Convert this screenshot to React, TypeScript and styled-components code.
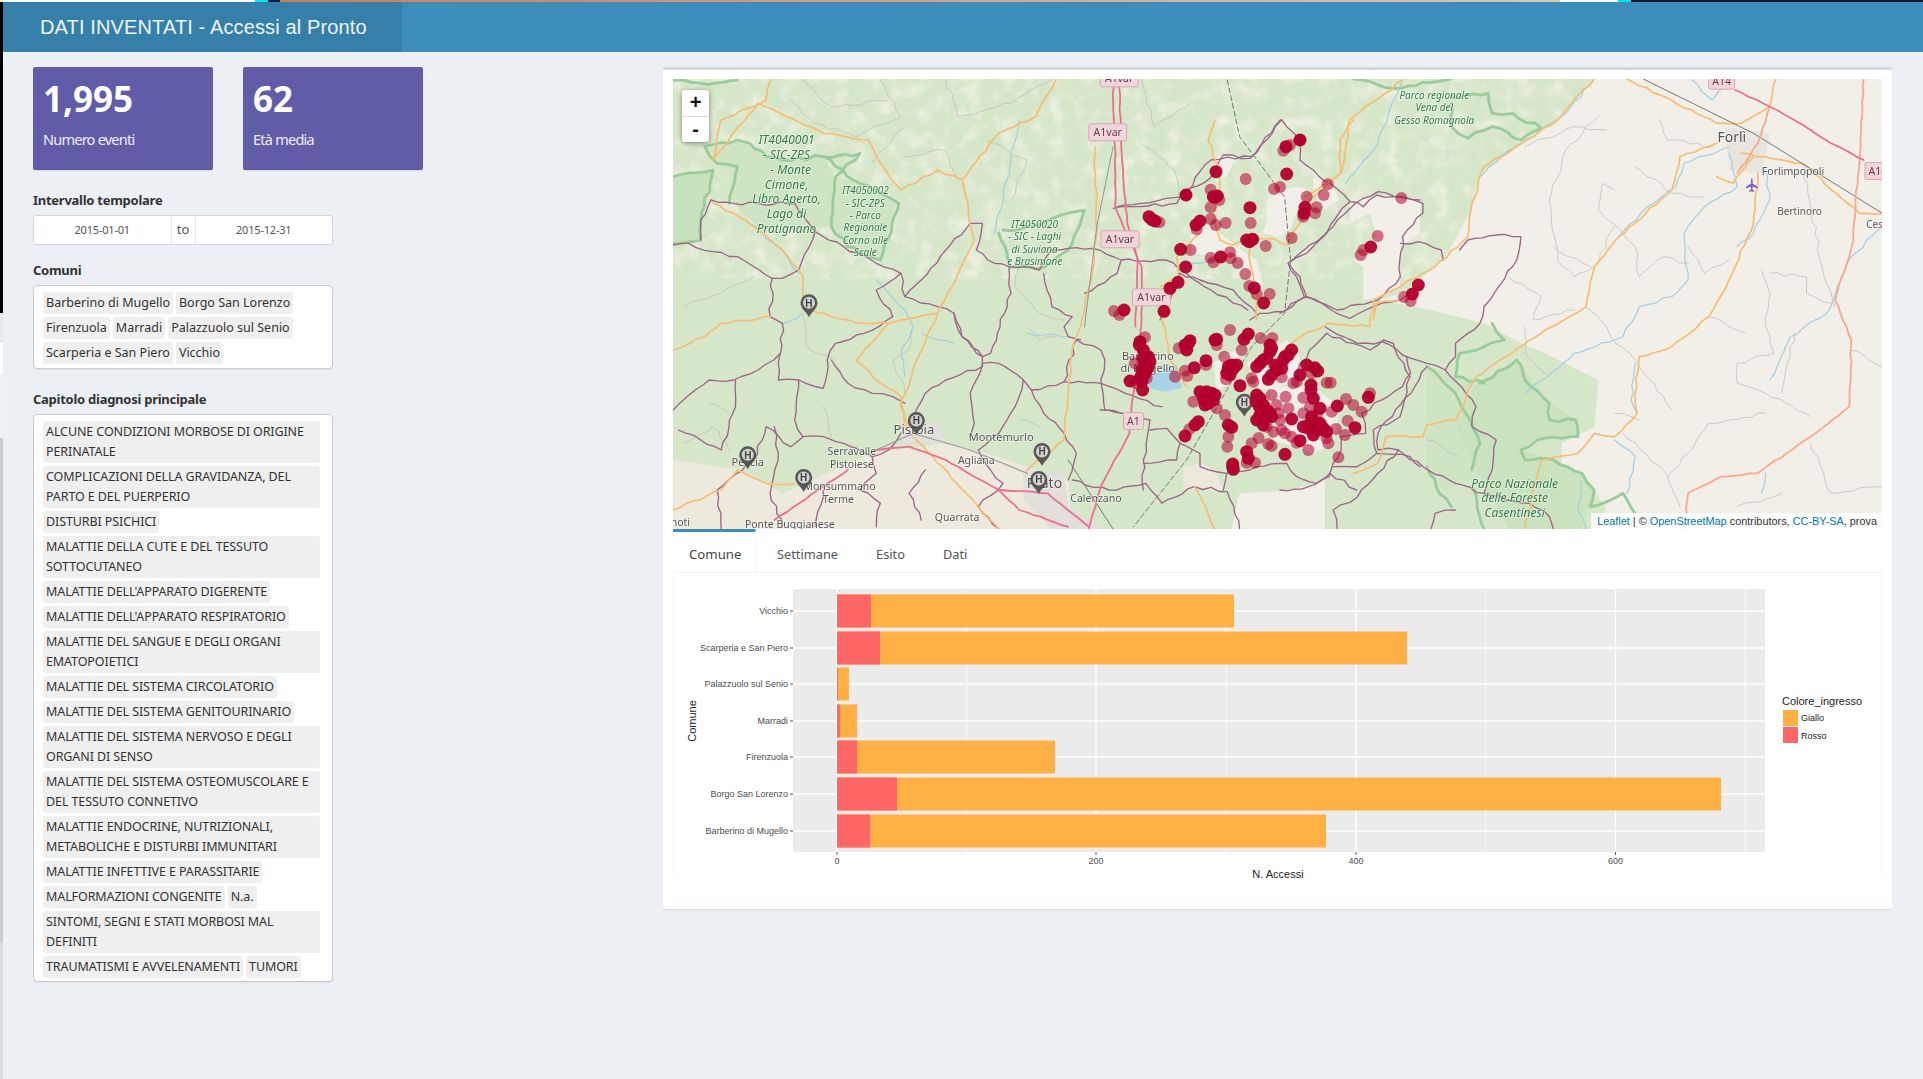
import React from 'react';
import styled, { createGlobalStyle } from 'styled-components';

const Global = createGlobalStyle`
  html, body { margin: 0; padding: 0; background: #ecf0f5; }
  body { font-family: "Noto Sans", "Open Sans", sans-serif; color: #333; overflow: hidden; }
  * { box-sizing: border-box; }
`;

const Page = styled.div`width: 1923px; height: 1079px; display: flex; flex-direction: column; overflow: hidden;`;
const TopStrip = styled.div`height: 2px; display: flex; flex: none;`;
const StripPart = styled.div<{ $w: number; $bg: string }>`width: ${p => p.$w}px; background: ${p => p.$bg};`;
const Body = styled.div`flex: 1; display: flex; min-height: 0;`;
const LeftEdge = styled.div`width: 3px; flex: none; display: flex; flex-direction: column;`;
const EdgePart = styled.div<{ $h: number; $bg: string }>`height: ${p => p.$h}px; background: ${p => p.$bg};`;
const Main = styled.div`flex: 1; display: flex; flex-direction: column; min-width: 0;`;
const Header = styled.header`height: 50px; flex: none; display: flex; background: #3c8dbc;`;
const Logo = styled.div`width: 399px; background: #367fa9; padding-left: 37px; color: #eef5f9; display: flex; align-items: center;
  font: 20px/1 "Liberation Sans", Arial, sans-serif; letter-spacing: .13px;`;
const Content = styled.div`display: grid; grid-template-columns: 630px 1229px; padding: 15px 0 0 30px; align-items: start;`;
const Sidebar = styled.aside`display: flex; flex-direction: column;`;
const Cards = styled.div`display: flex; gap: 30px; margin-bottom: 20px;`;
const Card = styled.div`width: 180px; height: 103px; background: #605ca8; border-radius: 2px; color: #fff; padding: 10px;
  box-shadow: 0 1px 1px rgba(0,0,0,.1);`;
const CardValue = styled.div`font: 700 35px/44px "Noto Sans", sans-serif;`;
const CardLabel = styled.div`font-size: 14.5px; line-height: 20px; margin-top: 8px; color: #f0eff8; letter-spacing: -.76px;`;
const Label = styled.div`font-weight: 700; font-size: 13px; line-height: 20px; width: 300px; margin-bottom: 5px; color: #333; letter-spacing: -.26px;`;
const DateRow = styled.div`width: 300px; height: 30px; display: flex; background: #fff; border: 1px solid #d2d6de; border-radius: 3px; margin-bottom: 15px;`;
const DateCell = styled.div`flex: 1; text-align: center; font-size: 11px; line-height: 28px; color: #555; letter-spacing: -.2px;`;
const DateTo = styled.div`width: 25px; text-align: center; font-size: 13px; line-height: 26px; color: #555; background: #fff; border: solid #e6e8ec; border-width: 0 1px;`;
const SelectBox = styled.div<{ $last?: boolean }>`width: 300px; background: #fff; border: 1px solid #c9cbd0; border-radius: 4px; padding: 6px 12px ${p => (p.$last ? 3 : 4)}px 9px;
  display: flex; flex-wrap: wrap; gap: 3px; margin-bottom: ${p => (p.$last ? 0 : 20)}px; box-shadow: 0 1px 1px rgba(0,0,0,.06);`;
const Chip = styled.span<{ $caps?: boolean }>`background: #efefef; border-radius: 3px; padding: 1px 3px; font-size: 12.5px; line-height: 20px; color: #333; max-width: 277px;
  letter-spacing: ${p => (p.$caps ? -0.1 : 0)}px;`;

const MapCard = styled.section`height: 842px; background: #fff; border-top: 3px solid #d2d6de; border-radius: 3px; padding: 9px 10px 0; box-shadow: 0 1px 1px rgba(0,0,0,.1);`;
const MapWrap = styled.div`position: relative; height: 450px; overflow: hidden; background: #d6e6c9;`;
const MapSvg = styled.svg`display: block; width: 1209px; height: 450px;`;
const ZoomCtl = styled.div`position: absolute; left: 9px; top: 11px; width: 27px; border-radius: 3px; background: #fff; box-shadow: 0 1px 5px rgba(0,0,0,.45);`;
const ZoomBtn = styled.div`height: 26px; font: 700 20px/25px "Liberation Sans", sans-serif; color: #111; text-align: center; & + & { border-top: 1px solid #ddd; }`;
const Attribution = styled.div`position: absolute; right: 0; bottom: 0; height: 16px; padding: 0 5px 0 6px; background: rgba(255,255,255,.8); color: #333; font: 10.9px/16px "Liberation Sans", sans-serif; white-space: nowrap;`;
const AttrLink = styled.span`color: #0078a8;`;
const Tabs = styled.nav`height: 44px; display: flex; border-bottom: 1px solid #f4f4f4;`;
const Tab = styled.div<{ $active?: boolean }>`height: 44px; padding: 12px 15px 0 ${p => (p.$active ? 16 : 21)}px; font-size: ${p => (p.$active ? 13.2 : 12.8)}px; line-height: 20px; color: ${p => (p.$active ? '#444' : '#555')};
  border-top: 3px solid ${p => (p.$active ? '#3c8dbc' : 'transparent')}; border-right: 1px solid ${p => (p.$active ? '#f4f4f4' : 'transparent')};
  width: ${p => (p.$active ? '83px' : 'auto')}; margin-right: ${p => (p.$active ? 0 : 1)}px;`;
const TabBody = styled.div`height: 305px; border: solid #f8f8f8; border-width: 0 1px;`;
const ChartSvg = styled.svg`display: block; width: 1207px; height: 305px; overflow: visible;`;

const chips1 = ['Barberino di Mugello', 'Borgo San Lorenzo', 'Firenzuola', 'Marradi', 'Palazzuolo sul Senio', 'Scarperia e San Piero', 'Vicchio'];
const chips2 = ['ALCUNE CONDIZIONI MORBOSE DI ORIGINE PERINATALE', 'COMPLICAZIONI DELLA GRAVIDANZA, DEL PARTO E DEL PUERPERIO', 'DISTURBI PSICHICI',
  'MALATTIE DELLA CUTE E DEL TESSUTO SOTTOCUTANEO', "MALATTIE DELL'APPARATO DIGERENTE", "MALATTIE DELL'APPARATO RESPIRATORIO",
  'MALATTIE DEL SANGUE E DEGLI ORGANI EMATOPOIETICI', 'MALATTIE DEL SISTEMA CIRCOLATORIO', 'MALATTIE DEL SISTEMA GENITOURINARIO',
  'MALATTIE DEL SISTEMA NERVOSO E DEGLI ORGANI DI SENSO', 'MALATTIE DEL SISTEMA OSTEOMUSCOLARE E DEL TESSUTO CONNETIVO',
  'MALATTIE ENDOCRINE, NUTRIZIONALI, METABOLICHE E DISTURBI IMMUNITARI', 'MALATTIE INFETTIVE E PARASSITARIE', 'MALFORMAZIONI CONGENITE', 'N.a.',
  'SINTOMI, SEGNI E STATI MORBOSI MAL DEFINITI', 'TRAUMATISMI E AVVELENAMENTI', 'TUMORI'];

/* ---------- map drawing: coordinates are page pixels, read through four crops ---------- */
type Z = 'a' | 'b' | 'c' | 'd';
const conv: Record<Z, (x: number, y: number) => [number, number]> = {
  a: (x, y) => [660 + x / 2.45, 60 + y / 3],
  b: (x, y) => [1280 + x / 2.45, 60 + y / 3],
  c: (x, y) => [1100 + x / 3, 120 + y / 3],
  d: (x, y) => [1100 + x / 3, 320 + y / 3],
};
const parse = (z: Z, s: string) => s.trim().split(/\s+/).map(p => { const [x, y] = p.split(',').map(Number); return conv[z](x, y); });
const pts = (z: Z, s: string) => parse(z, s).map(([x, y]) => `${x.toFixed(1)},${y.toFixed(1)}`).join(' ');
/* roads and boundaries wander: each straight leg is broken into short jittered steps */
const wiggle = (z: Z, s: string, amp: number) => {
  let seed = s.length * 7919 + 17;
  const rnd = () => { seed = (seed * 16807) % 2147483647; return seed / 2147483647 - 0.5; };
  const p = parse(z, s);
  const out: string[] = [];
  p.forEach(([x, y], i) => {
    out.push(`${x.toFixed(1)},${y.toFixed(1)}`);
    const nxt = p[i + 1];
    if (!nxt) return;
    const dx = nxt[0] - x, dy = nxt[1] - y, len = Math.hypot(dx, dy), n = Math.floor(len / 7);
    for (let k = 1; k < n; k++) {
      const t = k / n, o = rnd() * 2 * amp;
      out.push(`${(x + dx * t - (dy / len) * o).toFixed(1)},${(y + dy * t + (dx / len) * o).toFixed(1)}`);
    }
  });
  return out.join(' ');
};

const Area = styled.polygon<{ $c: string }>`fill: ${p => p.$c}; stroke: none;`;
const Line = styled.polyline<{ $c: string; $w: number; $dash?: string }>`fill: none; stroke: ${p => p.$c}; stroke-width: ${p => p.$w}; stroke-linejoin: round; stroke-linecap: round;
  ${p => (p.$dash ? `stroke-dasharray: ${p.$dash};` : '')}`;
const MapText = styled.text<{ $s: number; $c: string; $i?: boolean }>`font-family: "Noto Sans", sans-serif; font-size: ${p => p.$s}px; fill: ${p => p.$c}; text-anchor: middle;
  font-style: ${p => (p.$i ? 'italic' : 'normal')}; paint-order: stroke; stroke: rgba(255,255,255,.55); stroke-width: 1.5px;`;
const ShieldText = styled.text`font-family: "Noto Sans", sans-serif; font-size: 10.5px; fill: #6b3a4a; text-anchor: middle;`;
const Dot = styled.circle<{ $solid: boolean }>`fill: #b2002d; fill-opacity: ${p => (p.$solid ? 0.95 : 0.55)};`;
const PinLetter = styled.text`font: 700 10px "Liberation Sans", sans-serif; fill: #444; text-anchor: middle;`;

const beige = '#f2efe9';
const areas: [Z, string, string][] = [
  ['b', '770,57 680,180 490,340 470,450 400,600 300,700 240,720 370,750 500,790 590,850 650,880 780,960 770,1100 690,1150 690,1270 770,1290 800,1350 760,1407 1480,1407 1480,57', beige],
  ['a', '32,1200 200,1230 300,1300 520,1180 700,1150 800,1180 1000,1260 1010,1407 32,1407', '#ede9dd'],
  ['c', '270,345 300,330 350,330 400,370 430,395 470,420 490,500 470,520 450,470 420,420 340,410 280,400', beige],
  ['c', '500,240 540,215 580,200 620,205 570,330 540,350 490,340 500,300', beige],
  ['c', '640,170 690,190 720,240 670,270 640,210', beige],
  ['c', '750,250 820,225 900,230 960,245 960,340 900,380 900,500 850,530 790,540 790,440 760,420 830,350 810,280 750,310', beige],
  ['c', '350,110 410,105 380,170 350,190', beige],
  ['d', '340,130 380,100 420,90 400,190 350,210', beige],
  ['d', '440,130 560,60 600,110 580,190 480,210', beige],
  ['d', '510,200 640,200 720,260 700,370 640,400 520,360', beige],
  ['d', '250,440 310,430 350,460 370,510 250,510', '#ece8dc'],
  ['a', '1420,1300 1568,1290 1568,1407 1400,1407', beige],
  ['b', '0,1300 110,1260 110,1407 0,1407', beige],
  ['a', '110,260 190,240 260,290 400,290 430,350 420,500 250,510 180,430 170,340 140,310', '#cfe4c3'],
  ['a', '32,350 130,330 100,480 100,540 32,550', '#c8e1bd'],
  ['a', '420,500 430,350 490,370 580,430 540,600 460,560', '#cfe4c3'],
  ['b', '360,920 470,960 450,1080 490,1250 400,1290 360,1220', '#cfe4c2'],
  ['b', '480,970 580,900 660,1030 725,1080 730,1130 630,1140 590,1170 670,1200 740,1240 770,1290 740,1407 560,1407 490,1250 430,1100', '#cbe2bf'],
  ['a', '590,1090 680,1090 700,1150 590,1150', '#e2ded9'],
  ['a', '890,1230 990,1240 1000,1340 1090,1407 960,1407 890,1320', '#e2dfda'],
  ['b', '1090,200 1200,220 1180,340 1100,330', '#e8e4de'],
  ['d', '140,170 230,135 245,205 190,215 150,205', '#a9d3e6'],
];
const parks: [Z, string][] = [
  ['a', '110,260 190,240 220,250 260,290 300,300 400,290 490,280 430,350 420,500 460,560 540,600 585,430 540,400 490,370 400,290'],
  ['a', '32,350 130,330 100,480 100,540 32,552'],
  ['a', '110,260 140,310 190,320 170,430'],
  ['a', '830,520 860,622 940,622 1000,570 1040,450 900,500 840,510'],
  ['a', '32,60 100,70 190,60'],
  ['b', '180,57 280,85 420,57'],
  ['b', '420,110 510,100 520,160 570,160 640,205 590,240 520,200 460,235 420,200 420,130'],
  ['b', '520,790 550,840 500,860 440,880 430,950 500,970'],
  ['b', '360,920 430,1000 490,1150 470,1230'],
  ['b', '490,970 580,900 600,960 660,1030 660,1080 725,1080 730,1130 630,1140 590,1170 600,1200 670,1200 740,1240 770,1290 760,1340 840,1300 870,1360'],
  ['b', '360,1220 390,1300 420,1340'],
  ['b', '470,1280 500,1407'],
];
const rivers: [Z, string][] = [
  ['a', '210,480 290,560 340,640'], ['a', '300,790 350,760'], ['a', '530,660 600,750 620,800 590,880 600,950'], ['a', '640,820 720,850'],
  ['a', '820,520 860,300 880,180'], ['a', '900,820 1000,830'], ['a', '1260,620 1360,600'],
  ['b', '1100,60 1060,120 1010,60'], ['b', '770,57 700,160 620,230 540,290 490,350'],
  ['b', '1100,260 990,310 970,380 900,440 830,530'], ['b', '1100,280 1120,380 1040,440 990,520 1000,660 960,710 880,740 840,830 720,880 600,1000'],
  ['b', '1190,330 1200,420 1160,520 1120,560'], ['b', '1476,500 1400,590 1340,760 1250,830 1200,960'], ['b', '870,910 860,1020 875,1060'],
  ['b', '820,1140 870,1190 850,1300'], ['b', '740,1260 730,1350 750,1407'], ['b', '1190,1240 1180,1300'], ['b', '300,60 240,250 160,370'],
];
const minor: [Z, string][] = [
  ['a', '540,60 590,170 480,230 380,190 320,120'], ['a', '700,60 730,170 860,130 960,60'], ['a', '730,360 700,270 600,290'], ['a', '600,200 520,310'],
  ['a', '230,650 150,700 60,740'], ['a', '900,800 930,840 970,830'], ['a', '880,620 870,680 930,760 990,780'], ['a', '120,1030 170,1060'],
  ['a', '400,1040 420,1130'], ['a', '880,1080 930,1100'], ['a', '600,1000 570,900 610,870 620,800'], ['a', '350,60 420,140 560,120'], ['a', '800,240 900,300 860,420'],
  ['a', '1180,60 1210,200 1300,130'], ['a', '1180,250 1260,330 1270,410'], ['a', '350,760 360,860 430,900'], ['a', '60,1150 130,1100 170,1170'],
  ['b', '660,420 700,270 780,170'], ['b', '660,420 680,600 720,650 770,620 820,500'], ['b', '560,650 640,710 620,780 720,750'], ['b', '750,740 800,800 810,830 870,900 960,1050'],
  ['b', '820,390 790,370 780,450 870,560 880,650 940,590 1000,610'], ['b', '930,180 950,240 1060,260'], ['b', '870,320 960,400 1040,410'], ['b', '1000,560 1040,640 1100,600'],
  ['b', '1180,630 1200,700 1190,800 1210,880 1120,910 1120,970 1190,1000 1300,1070'], ['b', '1050,770 1140,820'], ['b', '1280,310 1300,440 1330,630 1360,740'],
  ['b', '1200,640 1290,650 1290,700 1350,730'], ['b', '1400,870 1476,920'], ['b', '1260,820 1230,1000'], ['b', '1300,1150 1350,1300 1476,1280'],
  ['b', '950,1250 1000,1180 1050,1090 1190,1060'], ['b', '840,1120 950,1250 980,1340'], ['b', '600,800 600,880 660,950'], ['b', '670,560 760,620'],
  ['b', '820,1060 880,1080'], ['b', '1120,1340 1230,1300'], ['b', '600,260 720,200 800,210'], ['b', '360,1140 440,1190'],
];
const borders: [Z, string][] = [
  ['a', '32,555 70,550 130,575 190,590 230,620 275,655 300,655 340,630 380,515'],
  ['a', '125,420 180,430 240,430 330,430 380,515 450,560 530,610 590,640 600,710 680,740 720,760 740,830 790,890 810,880 860,700 855,620'],
  ['a', '600,710 640,660 700,570 760,490 790,490 775,570 820,610 855,620 930,630 960,570 1060,565 1130,600 1240,600 1290,640 1350,690 1440,750'],
  ['a', '125,420 100,480 100,540'], ['a', '275,655 270,770 300,790 295,880 240,930 180,960 120,960 32,1050'],
  ['a', '185,960 185,1040 150,1170 100,1140 45,1110'], ['a', '295,880 290,960 340,960 400,985 410,900 430,850 500,820 570,770 530,690 590,640'],
  ['a', '420,900 460,970 520,1000 570,1010 600,1030'], ['a', '340,960 330,1080 350,1130 320,1160 260,1100 230,1200 140,1290 150,1407'],
  ['a', '720,760 740,830 790,890 790,920 700,960 650,1000 620,1080'], ['a', '790,910 830,910 890,960 910,990 990,965 1080,970 1140,1000 1230,1040'],
  ['a', '790,910 760,1000 770,1090 760,1130'], ['a', '890,960 870,1040 830,1120 780,1170'], ['a', '910,990 940,1060 990,1120 1020,1180 1000,1260'],
  ['a', '990,965 1020,840 1080,870 1090,900 1080,960 1090,1050 1130,1060'], ['a', '1030,840 1000,830 990,800 1010,770 960,740 940,640'],
  ['a', '1130,600 1120,640 1040,700'], ['a', '1120,440 1180,430 1280,410 1350,300 1450,290 1520,180'],
  ['a', '350,1130 400,1130 450,1150 520,1190 560,1170 590,1120'], ['a', '520,1190 530,1240 490,1290 540,1330 530,1400'], ['a', '1010,1260 1100,1290 1190,1270 1230,1330 1310,1280 1390,1295 1420,1407'],
  ['a', '650,1230 610,1300 640,1380'], ['a', '780,1170 810,1230 840,1270 780,1340 830,1407'], ['a', '400,1290 380,1400'], ['a', '280,1100 290,1180 270,1300 300,1400'],
  ['c', '40,265 100,260 230,250 250,215 330,175 370,105 450,115 500,60 545,0'],
  ['c', '545,0 600,60 600,120 640,150 690,190 750,245 790,260 830,225 880,230 960,240'],
  ['c', '750,245 710,290 680,340 620,400 565,430 600,470 620,530 710,580 750,595 820,560 900,540 960,500'],
  ['c', '620,530 550,575 480,580 450,600'], ['c', '240,460 300,480 400,510 470,580'], ['c', '240,460 210,540 180,600'],
  ['b', '295,550 340,545 395,570 400,600'], ['b', '185,430 240,395 300,410 350,430 350,460 300,530 295,650 240,720 140,750 60,710 20,610 130,500 185,430'],
  ['b', '440,570 460,540 530,525 590,530 580,600 530,690 500,740 490,790 430,850 430,890 405,930'],
  ['b', '0,760 60,710'], ['b', '110,800 190,850 250,845 300,885 360,910 405,930 480,1040 470,1100 530,1140 520,1230 500,1300'],
  ['b', '310,890 320,940 300,980 200,1060 210,1120 150,1130 150,1170 130,1210 120,1250 70,1280 0,1290'],
  ['b', '360,920 330,980 240,1120 240,1170 290,1170 350,1220 430,1270 500,1300 610,1330 660,1370 670,1407'],
  ['b', '290,1170 190,1310 130,1350 140,1407'], ['b', '370,1407 380,1360 430,1350'],
  ['d', '0,270 70,280 150,300 130,420 130,510'], ['d', '150,330 200,325 240,370 230,420 130,430'], ['d', '240,370 300,400 300,440 380,460 370,510'],
  ['d', '380,460 470,440 560,430 590,470 650,490 690,460 770,510'], ['d', '700,440 770,440 830,400 930,410 960,440'],
  ['d', '830,400 820,330 900,290 930,170 880,70 850,60 810,90 760,70 680,40 600,130 590,170'],
];
const secondary: [Z, string][] = [
  ['a', '32,870 110,830 150,790 270,770'], ['a', '350,650 350,740 420,770 500,790 560,790 480,900 540,970 590,1010 600,1100'],
  ['a', '560,790 680,760 770,540 740,360 830,220 920,170 970,60'], ['a', '740,360 680,330 590,390 540,310 510,240 400,220 240,130 130,300'], ['a', '130,300 150,180 260,120 270,60'],
  ['a', '350,650 300,570 210,480 130,430'], ['a', '1065,260 1070,500 1060,630 1030,800 1010,870 1000,1000 990,1140 900,1230'], ['a', '680,760 620,930 590,1040 610,1100'],
  ['a', '32,1350 150,1290 190,1230 260,1270 330,1270'], ['a', '620,1130 750,1300 830,1407'], ['a', '1230,770 1250,900 1290,980'], ['a', '1360,1407 1310,1280'],
  ['c', '345,0 325,60 350,130 360,200 340,280 360,360 400,375 440,360 520,355 560,375 600,310 620,250 690,185 720,160 720,60 760,0'],
  ['c', '300,340 230,410 235,470 180,500'], ['c', '450,380 450,430 470,510 470,600'], ['c', '820,600 830,550 900,540'],
  ['b', '300,60 170,180 150,340 60,410'], ['b', '770,57 680,180 500,320 470,430 460,530 380,620 230,720 220,800 120,790 50,830 0,880'],
  ['b', '850,57 1070,190 1130,190 1200,140 1215,57'], ['b', '1070,250 980,290 960,390 830,530 770,620 750,740 640,820 480,950 430,1080 360,1095 350,1130 260,1130 240,1210 180,1240'],
  ['b', '1170,340 1160,490 1100,660 1050,770 960,860 880,890 870,1000 875,1060 820,1130 770,1120 730,1180 640,1200 600,1407'],
  ['b', '1130,280 1280,310 1420,460 1476,460'], ['b', '1070,350 1110,370 1160,290'],
];
const primary: [Z, string][] = [
  ['b', '1430,57 1420,300 1410,420 1405,540 1360,720 1400,840 1395,1040 1300,1130 1170,1240 1080,1250 1000,1300 990,1407'],
  ['b', '1200,140 1170,250 1120,340'],
];
const motorway: [Z, string][] = [
  ['b', '1115,90 1200,140 1260,180 1300,210 1350,250 1430,300'],
  ['a', '1110,60 1115,300 1115,440 1180,620 1180,780 1160,1000 1150,1120 1080,1280 1050,1407'],
  ['a', '1125,60 1130,260 1145,490 1170,600 1165,800'],
  ['a', '530,1170 610,1160 700,1200 830,1290 950,1300 1050,1400'], ['a', '830,1290 880,1350 1000,1400'], ['a', '460,1230 280,1380'],
];
const parkLabels: [Z, number, number, string, number][] = [
  ['a', 310, 240, 'IT4040001', 12], ['a', 310, 285, '- SIC-ZPS', 12], ['a', 320, 330, '- Monte', 12], ['a', 310, 373, 'Cimone,', 12], ['a', 310, 417, 'Libro Aperto,', 12], ['a', 310, 462, 'Lago di', 12], ['a', 310, 505, 'Pratignano', 12],
  ['a', 503, 392, 'IT4050002', 10], ['a', 503, 430, '- SIC-ZPS', 10], ['a', 503, 466, '- Parco', 10], ['a', 503, 503, 'Regionale', 10], ['a', 503, 540, 'Corno alle', 10], ['a', 503, 576, 'Scale', 10],
  ['a', 918, 492, 'IT4050020', 10], ['a', 918, 530, '- SIC - Laghi', 10], ['a', 918, 567, 'di Suviana', 10], ['a', 918, 604, 'e Brasimone', 10],
  ['b', 378, 107, 'Parco regionale', 10], ['b', 378, 143, 'Vena del', 10], ['b', 378, 180, 'Gesso Romagnola', 10],
  ['b', 575, 1270, 'Parco Nazionale', 12], ['b', 575, 1313, 'delle Foreste', 12], ['b', 575, 1358, 'Casentinesi', 12],
];
const cityLabels: [Z, number, number, string, number][] = [
  ['a', 622, 1108, 'Pistoia', 13], ['a', 836, 1130, 'Montemurlo', 11], ['a', 470, 1175, 'Serravalle', 10.5], ['a', 470, 1213, 'Pistoiese', 10.5], ['a', 775, 1200, 'Agliana', 10.5],
  ['a', 215, 1205, 'Pescia', 11], ['a', 440, 1280, 'Monsummano', 10.5], ['a', 437, 1318, 'Terme', 10.5], ['a', 318, 1392, 'Ponte Buggianese', 10.5], ['a', 50, 1388, 'noti', 10.5], ['a', 728, 1373, 'Quarrata', 10.5],
  ['a', 1068, 1316, 'Calenzano', 10.5], ['a', 942, 1270, 'Prato', 14], ['a', 1195, 887, 'Barberino', 11], ['a', 1195, 925, 'di Mugello', 11],
  ['b', 1107, 230, 'Forlì', 14], ['b', 1257, 335, 'Forlimpopoli', 10.5], ['b', 1273, 454, 'Bertinoro', 10], ['b', 1478, 492, 'Cesena', 10],
];
const shields: [Z, number, number, string, number][] = [
  ['a', 1097, 217, 'A1var', 38], ['a', 1127, 538, 'A1var', 38], ['a', 1204, 712, 'A1var', 38], ['a', 1160, 1083, 'A1', 20], ['a', 1125, 55, 'A1var', 38], ['b', 1082, 62, 'A14', 26], ['b', 1465, 333, 'A14', 26],
];
const pins: [Z, number, number][] = [['a', 365, 772], ['a', 628, 1125], ['a', 215, 1228], ['a', 352, 1296], ['a', 936, 1218], ['a', 928, 1302], ['d', 433, 290]];

const dotStr: [Z, string, string][] = [
  ['c',
    '570,75 550,92 600,60 437,177 683,193 540,201 522,207 258,225 332,209 358,240 620,230 671,225 904,234 332,262 650,262 645,280 610,290 178,307 290,328 332,297 347,315 377,309 452,309 575,354 497,378 272,390 833,348 790,390 782,405 332,413 340,427 390,397 392,415 413,429 436,462 448,498 470,523 509,522 912,531 932,543 42,573 58,585',
    '558,80 348,155 560,162 345,232 352,228 340,230 450,263 615,262 612,280 147,290 155,298 165,303 300,303 288,315 440,360 452,360 448,365 458,358 242,388 812,381 362,411 257,441 234,487 210,505 463,504 491,549 937,522 955,495 72,570 192,574 258,225 600,60'],
  ['d',
    '135,52 105,130 108,190 140,175 236,85 350,75 390,30 482,54 517,54 425,90 373,110 318,135 255,152 262,168 225,170 378,178 455,175 460,185 545,172 590,185 580,190 635,160 680,188 692,188 610,233 738,237 760,255 785,275 695,275 630,260 810,220 280,245 350,265 375,285 385,350 382,380 268,328 515,225 557,230 530,255 535,280 565,265 610,280 590,368 625,390 505,372 515,378 476,354 440,428 465,428 520,335 545,330 575,350 555,340 708,327 735,345 743,302 685,370 680,355 715,412 540,300 500,320 455,370 650,285',
    '120,65 130,90 140,110 150,125 135,130 125,150 130,170 125,185 90,183 128,210 118,75 145,140 135,160 130,115 145,110 120,175 140,150 265,70 255,75 270,62 260,90 345,60 350,58 445,42 432,58 318,122 283,143 395,135 385,140 400,145 385,150 390,165 395,150 410,135 380,160 420,197 490,120 470,140 480,130 500,115 510,75 510,95 515,85 575,90 565,105 550,120 530,150 545,145 515,165 505,178 525,135 555,110 600,165 620,135 653,153 633,195 633,210 640,235 712,258 660,265 805,232 320,215 300,215 330,235 320,240 340,240 345,225 315,255 325,250 310,235 335,220 325,225 385,315 395,322 295,305 285,315 255,348 480,235 470,225 490,255 500,270 515,290 480,285 470,300 490,315 478,260 468,245 490,275 510,280 500,290 575,297 635,290 630,310 650,315 610,320 670,325 640,345 680,335 655,330 625,325 640,320 660,310 600,362 555,403 440,395 445,415 398,440 398,432 400,448 765,323 644,143'],
];

const Mark = ({ x, y }: { x: number; y: number }) => (
  <g transform={`translate(${x},${y})`}>
    <path d="M0 0C-2-5-8.5-8.5-8.5-14.5a8.5 8.5 0 0 1 17 0C8.5-8.5 2-5 0 0Z" fill="#4d4d4d" fillOpacity=".92" />
    <circle cy="-14.5" r="6" fill="#e8e8e6" fillOpacity=".85" />
    <PinLetter y="-10.8">H</PinLetter>
  </g>
);

const MapDrawing = () => (
  <MapSvg viewBox="673 79 1209 450" aria-label="mappa">
    <defs>
      <filter id="soft" x="-2%" y="-2%" width="104%" height="104%"><feGaussianBlur stdDeviation="0.5" /></filter>
      <filter id="tex" x="0" y="0" width="100%" height="100%">
        <feTurbulence type="fractalNoise" baseFrequency="0.06" numOctaves="3" seed="4" />
        <feColorMatrix values="0 0 0 0 0.93  0 0 0 0 0.91  0 0 0 0 0.82  1.8 0 0 0 -0.82" />
      </filter>
    </defs>
    <g filter="url(#soft)">
      <rect x="673" y="79" width="1209" height="450" fill="#d6e6c9" />
      <rect x="673" y="79" width="960" height="200" filter="url(#tex)" />
      {areas.map(([z, s, c], i) => <Area key={i} points={pts(z, s)} $c={c} />)}
      {minor.map(([z, s], i) => <Line key={i} points={wiggle(z, s, 2)} $c="#c2c2bc" $w={0.8} />)}
      {rivers.map(([z, s], i) => <Line key={i} points={wiggle(z, s, 1.6)} $c="#a3cfe2" $w={1.2} />)}
      {parks.map(([z, s], i) => <Line key={i} points={wiggle(z, s, 2)} $c="#9acb9a" $w={2.8} />)}
      {borders.map(([z, s], i) => <Line key={i} points={wiggle(z, s, 1.8)} $c="#9d6689" $w={1.35} />)}
      {secondary.map(([z, s], i) => <Line key={i} points={wiggle(z, s, 1.2)} $c="#f6bd74" $w={1.7} />)}
      <Line points={pts('b', '890,57 1160,220 1476,460')} $c="#777" $w={1} />
      <Line points={pts('a', '1000,1200 1110,1407')} $c="#777" $w={1} />
      <Line points={pts('a', '530,1170 620,1120 760,1170 900,1240')} $c="#a0a0a0" $w={1.3} />
      <Line points={pts('a', '1110,260 1070,500 1040,800')} $c="#8b8b8b" $w={0.9} />
      <Line points={pts('a', '1390,60 1420,230 1530,410 1545,600 1530,760 1450,860 1290,1200 1160,1400')} $c="#777" $w={1} $dash="5 3" />
      {primary.map(([z, s], i) => <Line key={i} points={wiggle(z, s, 0.8)} $c="#f8a98c" $w={1.8} />)}
      {motorway.map(([z, s], i) => <Line key={i} points={wiggle(z, s, 0.6)} $c="#e9708f" $w={1.8} />)}
      {shields.map(([z, x, y, t, w], i) => {
        const [X, Y] = conv[z](x, y);
        return (
          <g key={i}>
            <rect x={X - w / 2} y={Y - 8.5} width={w} height={17} rx={2} fill="#f0d5da" stroke="#d9a8b3" />
            <ShieldText x={X} y={Y + 4}>{t}</ShieldText>
          </g>
        );
      })}
      {parkLabels.map(([z, x, y, t, s], i) => { const [X, Y] = conv[z](x, y); return <MapText key={i} x={X} y={Y + s * 0.36} $s={s} $c="#2f7a45" $i>{t}</MapText>; })}
      {cityLabels.map(([z, x, y, t, s], i) => { const [X, Y] = conv[z](x, y); return <MapText key={i} x={X} y={Y + s * 0.36} $s={s} $c="#555">{t}</MapText>; })}
      <path d="M1751.6 182l1.6 0 3.4 5 4.4 0c1 0 1 1.6 0 1.6l-4.4 0-3.4 5-1.6 0 1.8-5-3-.1-1.2 1.6-1.2 0 .8-2.4-.8-2.4 1.2 0 1.2 1.6 3-.1z" transform="rotate(-90 1752 188)" fill="#7b62c9" />
      {pins.map(([z, x, y], i) => { const [X, Y] = conv[z](x, y); return <Mark key={i} x={X} y={Y} />; })}
      {dotStr.map(([z, light, dark]) => (
        <g key={z}>
          {parse(z, light).map(([X, Y], i) => <Dot key={i} cx={X} cy={Y} r={6} $solid={false} />)}
          {parse(z, dark).map(([X, Y], i) => <Dot key={i} cx={X} cy={Y} r={6.5} $solid />)}
        </g>
      ))}
    </g>
  </MapSvg>
);

/* ---------- chart ---------- */
const AxisText = styled.text<{ $a?: string }>`font: 9px "Liberation Sans", sans-serif; fill: #4d4d4d; text-anchor: ${p => p.$a || 'middle'};`;
const TitleText = styled.text<{ $a?: string }>`font: 11px "Liberation Sans", sans-serif; fill: #222; text-anchor: ${p => p.$a || 'middle'};`;
const LegendText = styled.text`font: 9px "Liberation Sans", sans-serif; fill: #222;`;
const ox = 674, oy = 573; // chart origin in page pixels
const rows: [string, number, number, number][] = [
  ['Vicchio', 611, 871, 1234], ['Scarperia e San Piero', 648, 880, 1407], ['Palazzuolo sul Senio', 684, 838, 849], ['Marradi', 721, 840, 857],
  ['Firenzuola', 757, 857, 1055], ['Borgo San Lorenzo', 794, 897, 1721], ['Barberino di Mugello', 831, 870, 1326],
];
const Chart = () => (
  <ChartSvg viewBox={`${ox} ${oy} 1207 305`} aria-label="grafico">
    <rect x="793" y="589" width="972" height="263" fill="#ebebeb" />
    {[966.7, 1226, 1485.7, 1745].map(x => <line key={x} x1={x} x2={x} y1="589" y2="852" stroke="#fff" strokeWidth=".7" />)}
    {[837, 1096, 1356, 1615.5].map(x => <line key={x} x1={x} x2={x} y1="589" y2="852" stroke="#fff" strokeWidth="1.4" />)}
    {rows.map(r => <line key={r[0]} x1="793" x2="1765" y1={r[1]} y2={r[1]} stroke="#fff" strokeWidth="1.4" />)}
    {rows.map(([n, y, red, end]) => (
      <g key={n}>
        <rect x="837" y={y - 16.5} width={end - 837} height="33" fill="#ffb045" />
        <rect x="837" y={y - 16.5} width={red - 837} height="33" fill="#ff6666" />
        <line x1="790" x2="793" y1={y} y2={y} stroke="#555" />
        <AxisText x="788" y={y + 3} $a="end">{n}</AxisText>
      </g>
    ))}
    {[[837, '0'], [1096, '200'], [1356, '400'], [1615.5, '600']].map(([x, t]) => (
      <g key={t as string}>
        <line x1={x as number} x2={x as number} y1="852" y2="855" stroke="#555" />
        <AxisText x={x as number} y="864">{t as string}</AxisText>
      </g>
    ))}
    <TitleText x="1278" y="877.5">N. Accessi</TitleText>
    <TitleText x="696" y="721" transform="rotate(-90 696 721)">Comune</TitleText>
    <TitleText x="1782" y="705" $a="start">Colore_ingresso</TitleText>
    <rect x="1783" y="710" width="15" height="16" fill="#ffb045" />
    <rect x="1783" y="727" width="15" height="16" fill="#ff6666" />
    <LegendText x="1801" y="721">Giallo</LegendText>
    <LegendText x="1801" y="739">Rosso</LegendText>
  </ChartSvg>
);

const edge: [number, string][] = [[311, '#000'], [30, '#e8e8e8'], [31, '#fff'], [64, '#f0f0f0'], [505, '#cccccc'], [136, '#dddddd']];

export default function App() {
  return (
    <Page>
      <Global />
      <TopStrip>
        <StripPart $w={255} $bg="#fff" />
        <StripPart $w={13} $bg="#00e5f0" />
        <StripPart $w={12} $bg="#101c50" />
        <StripPart $w={1280} $bg="linear-gradient(90deg,#c97d5e,#d9c9b5)" />
        <StripPart $w={58} $bg="#fff" />
        <StripPart $w={13} $bg="#00e5f0" />
        <StripPart $w={292} $bg="#0f1a2e" />
      </TopStrip>
      <Body>
        <LeftEdge>{edge.map(([h, c], i) => <EdgePart key={i} $h={h} $bg={c} />)}</LeftEdge>
        <Main>
          <Header><Logo>DATI INVENTATI - Accessi al Pronto</Logo></Header>
          <Content>
            <Sidebar>
              <Cards>
                <Card><CardValue>1,995</CardValue><CardLabel>Numero eventi</CardLabel></Card>
                <Card><CardValue>62</CardValue><CardLabel>Età media</CardLabel></Card>
              </Cards>
              <Label>Intervallo tempolare</Label>
              <DateRow><DateCell>2015-01-01</DateCell><DateTo>to</DateTo><DateCell>2015-12-31</DateCell></DateRow>
              <Label>Comuni</Label>
              <SelectBox>{chips1.map(c => <Chip key={c}>{c}</Chip>)}</SelectBox>
              <Label>Capitolo diagnosi principale</Label>
              <SelectBox $last>{chips2.map(c => <Chip key={c} $caps>{c}</Chip>)}</SelectBox>
            </Sidebar>
            <MapCard>
              <MapWrap>
                <MapDrawing />
                <ZoomCtl><ZoomBtn>+</ZoomBtn><ZoomBtn>-</ZoomBtn></ZoomCtl>
                <Attribution><AttrLink>Leaflet</AttrLink> | © <AttrLink>OpenStreetMap</AttrLink> contributors, <AttrLink>CC-BY-SA</AttrLink>, prova</Attribution>
              </MapWrap>
              <Tabs>
                <Tab $active>Comune</Tab><Tab>Settimane</Tab><Tab>Esito</Tab><Tab>Dati</Tab>
              </Tabs>
              <TabBody><Chart /></TabBody>
            </MapCard>
          </Content>
        </Main>
      </Body>
    </Page>
  );
}
